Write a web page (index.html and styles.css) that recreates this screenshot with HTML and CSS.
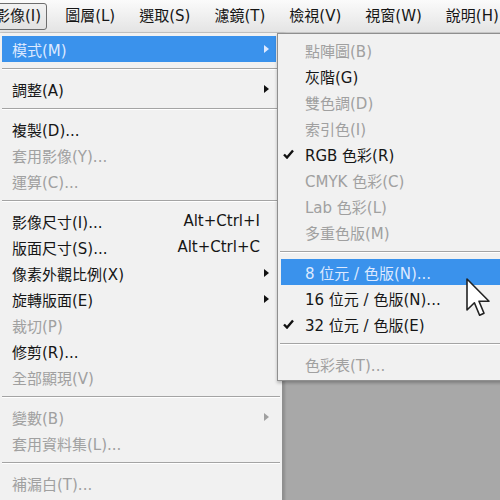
FILE: index.html
```html
<!DOCTYPE html>
<html lang="zh-Hant">
<head>
    <meta charset="UTF-8">
    <meta name="viewport" content="width=device-width, initial-scale=1.0">
    <title>影像選單</title>
    <link rel="stylesheet" href="styles.css">
</head>
<body>
    <nav class="menubar">
        <span class="menubar-item active">影像(I)</span>
        <span class="menubar-item">圖層(L)</span>
        <span class="menubar-item">選取(S)</span>
        <span class="menubar-item">濾鏡(T)</span>
        <span class="menubar-item">檢視(V)</span>
        <span class="menubar-item">視窗(W)</span>
        <span class="menubar-item">說明(H)</span>
    </nav>

    <div class="menus">
        <ul class="menu main-menu">
            <li class="item open"><span class="label">模式(M)</span><span class="key"></span><span class="arrow"></span></li>
            <li class="sep"></li>
            <li class="item"><span class="label">調整(A)</span><span class="key"></span><span class="arrow"></span></li>
            <li class="sep"></li>
            <li class="item"><span class="label">複製(D)...</span></li>
            <li class="item disabled"><span class="label">套用影像(Y)...</span></li>
            <li class="item disabled"><span class="label">運算(C)...</span></li>
            <li class="sep"></li>
            <li class="item"><span class="label">影像尺寸(I)...</span><span class="key">Alt+Ctrl+I</span></li>
            <li class="item"><span class="label">版面尺寸(S)...</span><span class="key">Alt+Ctrl+C</span></li>
            <li class="item"><span class="label">像素外觀比例(X)</span><span class="key"></span><span class="arrow"></span></li>
            <li class="item"><span class="label">旋轉版面(E)</span><span class="key"></span><span class="arrow"></span></li>
            <li class="item disabled"><span class="label">裁切(P)</span></li>
            <li class="item"><span class="label">修剪(R)...</span></li>
            <li class="item disabled"><span class="label">全部顯現(V)</span></li>
            <li class="sep"></li>
            <li class="item disabled"><span class="label">變數(B)</span><span class="key"></span><span class="arrow"></span></li>
            <li class="item disabled"><span class="label">套用資料集(L)...</span></li>
            <li class="sep"></li>
            <li class="item disabled"><span class="label">補漏白(T)...</span></li>
        </ul>

        <ul class="menu submenu">
            <li class="item disabled"><span class="check"></span><span class="label">點陣圖(B)</span></li>
            <li class="item"><span class="check"></span><span class="label">灰階(G)</span></li>
            <li class="item disabled"><span class="check"></span><span class="label">雙色調(D)</span></li>
            <li class="item disabled"><span class="check"></span><span class="label">索引色(I)</span></li>
            <li class="item"><span class="check"><svg width="11" height="10" viewBox="0 0 11 10"><path d="M1 5.5 L4 8.5 L10 1.5" fill="none" stroke="#111" stroke-width="2.4"/></svg></span><span class="label">RGB 色彩(R)</span></li>
            <li class="item disabled"><span class="check"></span><span class="label">CMYK 色彩(C)</span></li>
            <li class="item disabled"><span class="check"></span><span class="label">Lab 色彩(L)</span></li>
            <li class="item disabled"><span class="check"></span><span class="label">多重色版(M)</span></li>
            <li class="sep"></li>
            <li class="item open"><span class="check"></span><span class="label">8 位元 / 色版(N)...</span></li>
            <li class="item"><span class="check"></span><span class="label">16 位元 / 色版(N)...</span></li>
            <li class="item"><span class="check"><svg width="11" height="10" viewBox="0 0 11 10"><path d="M1 5.5 L4 8.5 L10 1.5" fill="none" stroke="#111" stroke-width="2.4"/></svg></span><span class="label">32 位元 / 色版(E)</span></li>
            <li class="sep"></li>
            <li class="item disabled"><span class="check"></span><span class="label">色彩表(T)...</span></li>
        </ul>

        <svg class="cursor" width="24" height="40" viewBox="0 0 12 20">
            <path d="M0.5 0.5 L0.5 16 L4.2 12.4 L6.8 18.6 L9 17.6 L6.5 11.6 L11.5 11.6 Z" fill="#fff" stroke="#222" stroke-width="0.8" stroke-linejoin="round"/>
        </svg>
    </div>
</body>
</html>
```

FILE: styles.css
```css
body {
    margin: 0;
    height: 500px;
    overflow: hidden;
    background-color: #a8a8a8;
    font-family: "DejaVu Sans", "Noto Sans CJK TC", sans-serif;
    font-size: 15px;
    color: #161616;
}
.menubar {
    display: flex;
    align-items: center;
    height: 32px;
    background: linear-gradient(#fbfbfb, #e4e4e4);
    border-bottom: 1px solid #c9c9c9;
    white-space: nowrap;
}
.menubar-item {
    padding: 0 5px;
    margin: 0 6px;
    height: 25px;
    line-height: 25px;
    border: 1px solid transparent;
    border-radius: 3px;
}
.menubar-item:first-child {
    margin-left: -6px;
    padding-left: 0;
}
.menubar-item.active {
    border-color: #6d6d6d;
    background: linear-gradient(#f2f2f2, #e2e2e2);
}
.menus {
    position: relative;
}
.menu {
    list-style: none;
    margin: 0;
    padding: 3px 0;
    background-color: #f1f1f1;
    white-space: nowrap;
}
.main-menu {
    width: 282px;
    min-height: 480px;
    border-right: 1px solid #8f8f8f;
    box-shadow: 2px 0 2px rgba(0, 0, 0, 0.15);
}
.submenu {
    position: absolute;
    left: 277px;
    top: 0;
    width: 240px;
    border: 1px solid #8f8f8f;
    box-shadow: 0 2px 3px rgba(0, 0, 0, 0.25);
}
.item {
    height: 26px;
    margin: 0 2px;
    display: flex;
    align-items: center;
}
.main-menu .item {
    width: 274px;
    padding-left: 10px;
    box-sizing: border-box;
}
.main-menu .label {
    flex: 1;
}
.key {
    padding-right: 16px;
}
.arrow {
    width: 0;
    height: 0;
    margin-right: 7px;
    border-top: 4px solid transparent;
    border-bottom: 4px solid transparent;
    border-left: 5px solid #111;
}
.submenu .item {
    margin-left: 3px;
}
.check {
    width: 24px;
    padding-left: 2px;
    box-sizing: border-box;
    display: flex;
    align-items: center;
}
.disabled {
    color: #a0a0a0;
}
.disabled .arrow {
    border-left-color: #a0a0a0;
}
.open {
    background-color: #3a92ec;
    color: #dde9ff;
}
.open .arrow {
    border-left-color: #dde9ff;
}
.sep {
    height: 14px;
    margin: 0 2px;
    padding-top: 6px;
    box-sizing: border-box;
}
.sep::after {
    content: "";
    display: block;
    height: 1px;
    background-color: #a4a4a4;
    border-bottom: 1px solid #ffffff;
}
.cursor {
    position: absolute;
    left: 466px;
    top: 245px;
}
```
